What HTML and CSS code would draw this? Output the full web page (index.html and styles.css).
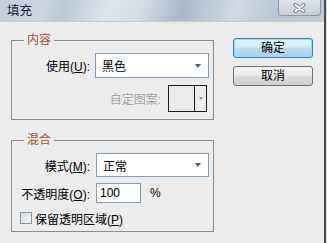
FILE: index.html
```html
<!DOCTYPE html>
<html>
<head>
<meta charset="utf-8">
<link rel="stylesheet" href="styles.css">
</head>
<body>
<div class="window">
  <div class="titlebar">
    <span class="title">填充</span>
    <div class="close">
      <svg width="13" height="10" viewBox="0 0 13 10">
        <path d="M2.5 2 L10.5 8 M10.5 2 L2.5 8" stroke="#7c8796" stroke-width="4" stroke-linecap="round" fill="none"/>
        <path d="M2.5 2 L10.5 8 M10.5 2 L2.5 8" stroke="#ffffff" stroke-width="2" stroke-linecap="round" fill="none"/>
      </svg>
    </div>
  </div>
  <div class="content">
    <div class="left">
      <div class="group g1">
        <span class="legend">内容</span>
        <div class="row r1">
          <span class="label">使用(<u>U</u>):</span>
          <div class="select"><span>黑色</span><i class="arrow"></i></div>
        </div>
        <div class="row r2">
          <span class="label-dis">自定图案:</span>
          <div class="pattern"><div class="swatch"></div><div class="pbtn"><i class="arrow-dis"></i></div></div>
        </div>
      </div>
      <div class="group g2">
        <span class="legend">混合</span>
        <div class="row r3">
          <span class="label">模式(<u>M</u>):</span>
          <div class="select s2"><span>正常</span><i class="arrow"></i></div>
        </div>
        <div class="row r4">
          <span class="label">不透明度(<u>O</u>):</span>
          <div class="input">100</div>
          <span class="pct">%</span>
        </div>
        <div class="row r5">
          <span class="check"></span>
          <span class="ctext">保留透明区域(<u>P</u>)</span>
        </div>
      </div>
    </div>
    <div class="right">
      <div class="btn primary">确定</div>
      <div class="btn">取消</div>
    </div>
  </div>
</div>
</body>
</html>
```
FILE: styles.css
```css
html, body {
  margin: 0;
  padding: 0;
  background: #ececec;
}
body {
  font-family: "Liberation Sans", "Noto Sans CJK SC", sans-serif;
  font-size: 12px;
  color: #000;
}
.window {
  width: 327px;
  height: 243px;
  box-sizing: border-box;
  background: #ececec;
  box-shadow: inset -1px 0 #d4d4d4, inset -3px 0 #4d4d4d;
  overflow: hidden;
}
.titlebar {
  height: 21px;
  margin-right: 3px;
  padding-right: 3px;
  border-bottom: 1px solid #c8ccd2;
  display: flex;
  align-items: flex-start;
  background: linear-gradient(110deg, #c3cdd9 0%, #cdd6e1 14%, #bcc8d6 20%, #dfe5ed 34%, #d3dbe5 44%, #a9b8ca 56%, #bcc8d6 64%, #d2dae4 72%, #b8c5d4 86%, #c0cbd8 100%);
}
.title {
  margin-left: 7px;
  margin-top: 3px;
  line-height: 16px;
  font-size: 12.5px;
  color: #17203c;
}
.close {
  margin-left: auto;
  width: 41px;
  height: 15px;
  border: 1px solid #8e99a8;
  border-top: none;
  border-radius: 0 0 4px 4px;
  background: linear-gradient(#dfe4ea, #c4ccd6);
  display: flex;
  align-items: center;
  justify-content: center;
}
.content {
  display: flex;
}
.left {
  width: 203px;
  margin-left: 11px;
  padding-top: 18px;
}
.group {
  border: 1px solid #8c8c8c;
  display: flex;
  flex-direction: column;
}
.g1 { padding-bottom: 7px; }
.g2 { margin-top: 20px; padding-bottom: 6px; }
.legend {
  align-self: flex-start;
  margin: -8px 0 0 12px;
  padding: 0 3px;
  height: 14px;
  line-height: 14px;
  background: #ececec;
  color: #a5522b;
}
.row {
  display: flex;
  align-items: center;
}
.r1 { margin-top: 6px; height: 25px; }
.r2 { margin-top: 7px; height: 27px; justify-content: flex-end; padding-right: 6px; }
.r3 { margin-top: 6px; height: 24px; }
.r4 { margin-top: 6px; height: 20px; }
.r5 { margin-top: 8px; height: 14px; }
.label {
  width: 78px;
  text-align: right;
  white-space: nowrap;
}
.label-dis {
  color: #a2a2a2;
  margin-right: 7px;
}
.select {
  margin-left: 5px;
  width: 114px;
  height: 100%;
  box-sizing: border-box;
  border: 1px solid #7f9db9;
  background: #fff;
  display: flex;
  align-items: center;
  padding-left: 6px;
  padding-right: 7px;
}
.select span { flex: 1; }
.s2 { margin-left: 6px; width: 113px; }
.arrow {
  width: 0;
  height: 0;
  border-left: 3.5px solid transparent;
  border-right: 3.5px solid transparent;
  border-top: 4px solid #4a5a78;
}
.pattern {
  width: 39px;
  height: 27px;
  box-sizing: border-box;
  border: 1px solid #1a1a1a;
  display: flex;
}
.swatch {
  width: 25px;
  border-right: 1px solid #1a1a1a;
}
.pbtn {
  flex: 1;
  display: flex;
  align-items: center;
  justify-content: center;
}
.arrow-dis {
  width: 0;
  height: 0;
  border-left: 2.5px solid transparent;
  border-right: 2.5px solid transparent;
  border-top: 3px solid #9a9a9a;
}
.input {
  margin-left: 6px;
  width: 45px;
  height: 20px;
  box-sizing: border-box;
  border: 1px solid #7f9db9;
  background: #fff;
  padding-left: 3px;
  line-height: 18px;
}
.pct { margin-left: 9px; }
.check {
  margin-left: 8px;
  width: 12px;
  height: 12px;
  box-sizing: border-box;
  border: 1px solid #8596ab;
  background: linear-gradient(135deg, #d8dde4, #f4f6f8);
}
.ctext { margin-left: 3px; }
.right {
  margin-left: 19px;
  padding-top: 16px;
  display: flex;
  flex-direction: column;
  gap: 8px;
}
.btn {
  width: 80px;
  height: 20px;
  box-sizing: border-box;
  border: 1px solid #707070;
  border-radius: 3px;
  background: linear-gradient(#f3f3f3 0%, #ebebeb 45%, #dddddd 50%, #cfcfcf 100%);
  text-align: center;
  line-height: 18px;
}
.primary {
  border-color: #3c7fb1;
  background: linear-gradient(#e5f3fb 0%, #d4eaf8 45%, #b9dcf3 50%, #a8d2ee 100%);
  box-shadow: inset 0 0 0 1px #9fd5f5;
}
```
